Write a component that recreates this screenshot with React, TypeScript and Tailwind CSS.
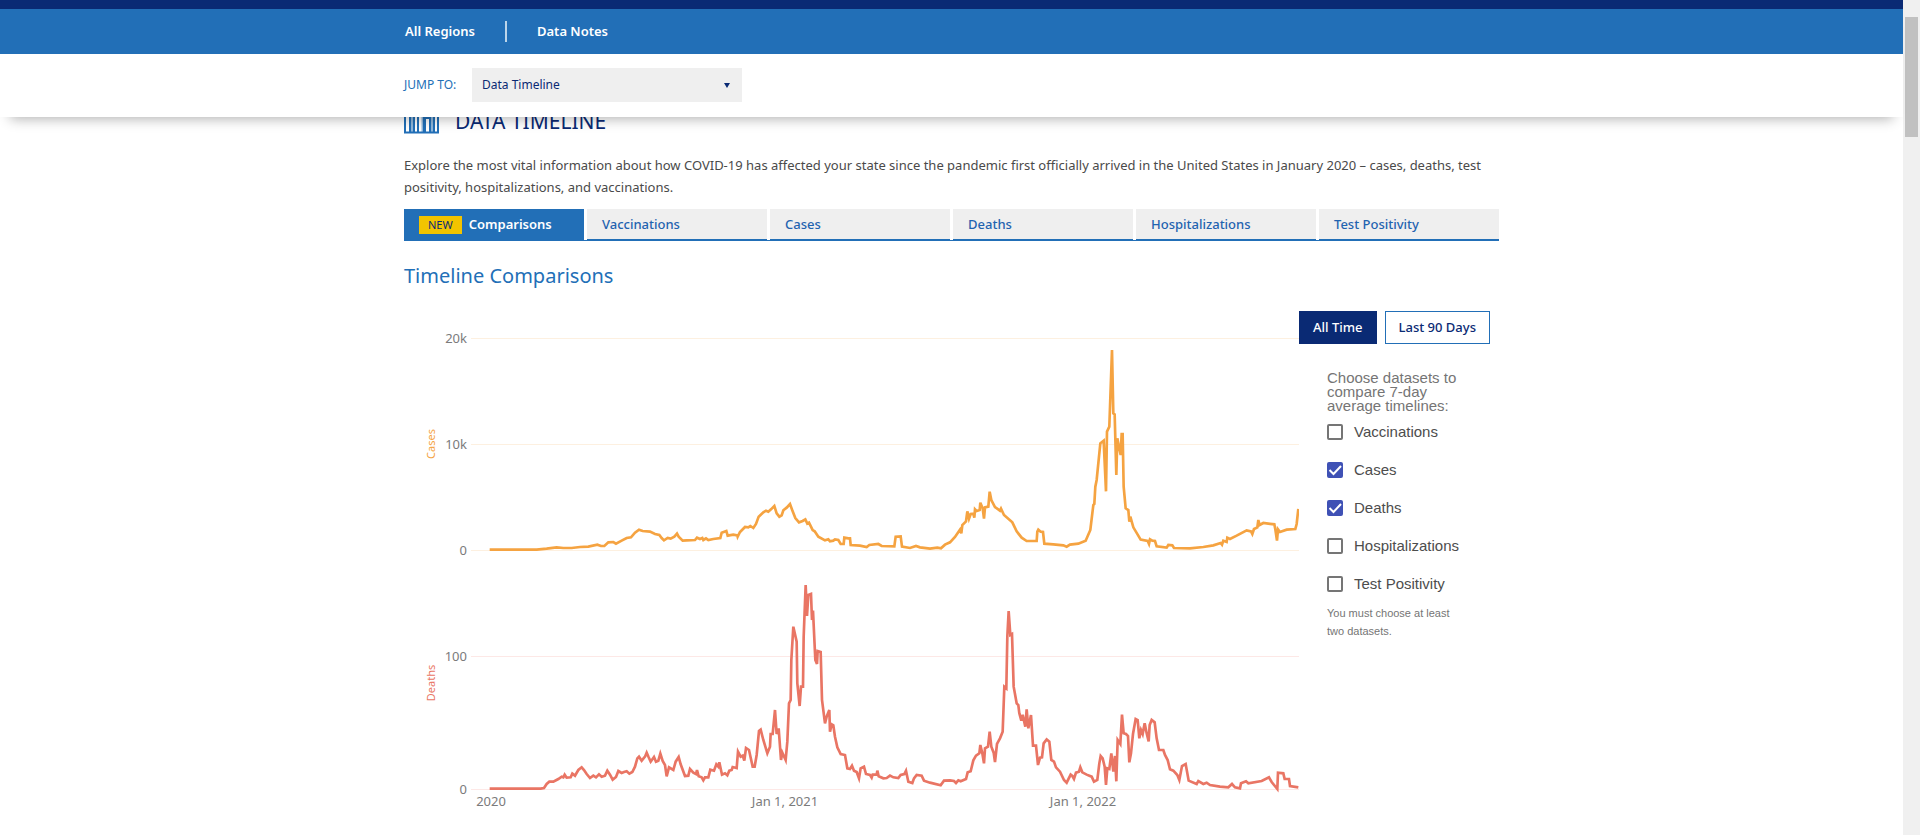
import { useState } from "react";

const TABS = ["Comparisons", "Vaccinations", "Cases", "Deaths", "Hospitalizations", "Test Positivity"];
const DATASETS = ["Vaccinations", "Cases", "Deaths", "Hospitalizations", "Test Positivity"];

const CASES =
  "269,689 410,689 440,686 470,682 490,684 515,684 540,681 565,680 592,674 603,678 613,678 625,667 640,666 648,671 665,662 680,654 693,652 705,638 717,629 728,633 750,635 765,642 778,645 785,654 792,661 803,654 812,656 823,650 831,641 836,650 848,662 860,661 885,660 891,653 900,657 907,654 910,660 918,655 925,660 940,657 961,654 965,638 979,633 983,647 1000,644 1012,646 1013,650 1020,636 1035,621 1045,622 1051,618 1060,624 1068,612 1076,590 1090,577 1098,572 1105,575 1113,568 1123,558 1130,580 1138,590 1145,586 1150,571 1160,563 1170,552 1178,574 1186,594 1197,607 1208,603 1216,598 1222,611 1227,608 1234,622 1238,630 1244,634 1255,650 1275,661 1285,658 1290,664 1300,662 1305,658 1315,660 1322,672 1331,672 1333,653 1345,655 1350,655 1352,675 1380,677 1400,681 1408,675 1435,672 1445,678 1483,679 1487,650 1502,649 1506,680 1530,684 1548,678 1560,682 1590,686 1612,683 1623,685 1635,674 1650,667 1665,651 1680,629 1684,640 1687,615 1698,604 1702,574 1707,596 1712,582 1720,581 1723,593 1725,568 1730,573 1739,570 1741,548 1748,565 1752,596 1755,562 1765,560 1769,515 1774,540 1785,561 1800,572 1803,566 1812,585 1837,607 1850,634 1865,653 1880,663 1910,663 1912,635 1915,629 1922,635 1929,636 1933,671 1960,673 1990,676 2000,680 2010,674 2035,671 2057,662 2071,630 2080,555 2083,552 2086,500 2090,480 2101,370 2111,362 2118,514 2121,335 2128,320 2136,90 2140,280 2144,283 2149,465 2152,355 2158,385 2162,405 2165,342 2168,342 2171,500 2177,565 2185,570 2188,605 2191,590 2200,622 2222,659 2243,663 2247,672 2250,658 2257,662 2265,663 2270,679 2300,683 2305,675 2317,676 2322,684 2370,685 2410,681 2440,676 2462,669 2466,674 2470,662 2480,666 2482,653 2490,657 2510,647 2540,631 2553,634 2557,642 2562,627 2572,622 2575,600 2579,615 2590,609 2605,611 2623,613 2626,628 2631,662 2634,628 2640,636 2660,629 2686,627 2690,612 2695,567";

const DEATHS =
  "269,656 422,656 432,654 440,642 448,635 460,635 475,627 485,620 490,622 494,614 500,623 512,622 517,611 525,617 535,600 545,592 552,600 560,612 570,624 580,617 588,622 597,613 605,620 615,617 622,602 630,614 638,629 648,621 655,603 665,609 672,606 680,604 688,611 697,606 705,590 712,565 717,560 725,572 735,560 740,548 746,562 752,575 762,561 768,575 775,572 781,551 788,573 795,585 800,619 807,592 820,600 827,575 836,561 842,583 855,618 865,617 870,597 880,608 888,612 891,600 896,619 905,622 910,631 915,622 925,622 931,599 942,602 949,583 955,590 958,577 966,614 975,610 982,616 988,602 995,600 998,591 1010,594 1014,545 1022,560 1028,557 1033,572 1038,534 1047,540 1058,590 1064,590 1070,555 1077,483 1082,479 1090,510 1102,550 1110,530 1112,492 1118,492 1125,420 1130,492 1136,475 1143,570 1147,548 1157,570 1162,515 1167,400 1172,390 1174,270 1180,170 1190,215 1192,340 1199,408 1203,350 1209,350 1211,200 1217,45 1221,138 1225,75 1233,72 1236,150 1239,122 1246,270 1251,282 1253,243 1262,246 1266,390 1275,460 1280,440 1284,430 1288,420 1290,485 1295,463 1300,466 1305,500 1312,532 1322,552 1335,555 1342,595 1350,597 1356,587 1362,602 1370,606 1377,625 1382,595 1392,590 1398,612 1410,615 1415,623 1418,614 1430,614 1432,602 1436,619 1450,625 1460,624 1470,617 1480,622 1495,624 1502,615 1513,612 1518,602 1525,635 1537,639 1542,625 1550,615 1565,617 1572,632 1590,638 1622,646 1632,632 1650,631 1662,633 1668,639 1675,631 1682,634 1698,627 1703,607 1712,604 1720,571 1728,557 1738,550 1741,525 1747,550 1752,580 1755,535 1764,530 1769,485 1774,530 1781,548 1785,576 1791,522 1800,505 1808,485 1813,350 1819,355 1822,200 1826,123 1831,195 1836,192 1841,350 1850,400 1855,405 1858,430 1864,452 1868,434 1876,470 1880,418 1885,475 1893,435 1899,527 1908,527 1914,585 1920,563 1926,562 1931,520 1940,508 1948,515 1954,570 1962,575 1968,592 1980,605 1992,630 2000,638 2012,614 2017,618 2022,627 2028,608 2037,605 2041,592 2047,607 2060,614 2075,620 2082,635 2092,630 2098,580 2102,558 2108,565 2114,590 2118,645 2122,595 2128,597 2134,550 2140,605 2145,558 2149,634 2153,510 2161,522 2166,434 2171,490 2178,492 2184,498 2188,577 2193,550 2199,492 2207,447 2213,450 2218,505 2223,480 2228,492 2234,460 2240,490 2246,514 2249,465 2255,450 2264,457 2270,505 2277,540 2290,540 2295,555 2303,570 2310,598 2320,602 2332,615 2338,630 2346,588 2357,582 2366,632 2390,642 2395,633 2410,642 2420,638 2430,645 2460,650 2485,652 2496,642 2505,652 2520,655 2523,640 2538,634 2545,640 2585,633 2607,622 2615,636 2632,657 2634,608 2650,610 2654,627 2667,627 2670,648 2695,652";

function TimelineIcon() {
  return (
    <svg width="35" height="36" viewBox="0 0 35 36" fill="none" stroke="#226fb7" strokeWidth="2" aria-hidden="true">
      <path d="M1 35V14h5v21M10 35V8h4v27M14 35V3h6v32M21 35V20h5v15M30 35V10h4v25M0 34.500h35" />
      <path strokeWidth="3" d="M7.500 35V14M19 35V6M28 35V12" opacity=".5" />
    </svg>
  );
}

function TimelineChart() {
  return (
    <svg className="min-w-0 shrink-0" width="895" height="509" viewBox="0 0 895 509" role="img" aria-label="Cases and deaths timelines">
      <g stroke="#fdf0e0" shapeRendering="crispEdges">
        <path d="M67 27.500H895M67 133.500H895M67 239.500H895" />
      </g>
      <g stroke="#fde8e6" shapeRendering="crispEdges">
        <path d="M67 345.500H895M67 478.500H895" />
      </g>
      <polyline points={CASES} transform="translate(-4 9) scale(.33333)" fill="none" stroke="#f5a341" strokeWidth="8" />
      <polyline points={DEATHS} transform="translate(-4 259) scale(.33333)" fill="none" stroke="#e97564" strokeWidth="8" />
      <g fill="#7b7b7b" fontSize="13" textAnchor="end">
        <text x="63" y="32">20k</text>
        <text x="63" y="138">10k</text>
        <text x="63" y="244">0</text>
        <text x="63" y="350">100</text>
        <text x="63" y="483">0</text>
      </g>
      <g fill="#7b7b7b" fontSize="13" textAnchor="middle">
        <text x="87" y="495">2020</text>
        <text x="381" y="495">Jan 1, 2021</text>
        <text x="679" y="495">Jan 1, 2022</text>
      </g>
      <g fontSize="11" textAnchor="middle">
        <text transform="translate(31 133) rotate(-90)" fill="#f5a341">Cases</text>
        <text transform="translate(31 372) rotate(-90)" fill="#e97564">Deaths</text>
      </g>
    </svg>
  );
}

export default function App() {
  const [tab, setTab] = useState("Comparisons");
  const [range, setRange] = useState("All Time");
  const [chosen, setChosen] = useState(["Cases", "Deaths"]);
  const toggle = (name: string) =>
    setChosen((c) => (c.includes(name) ? c.filter((n) => n !== name) : [...c, name]));

  return (
    <div className="flex h-screen overflow-hidden bg-white font-['Noto_Sans',sans-serif]">
      <div className="relative min-w-0 flex-1">
        <header className="absolute inset-x-0 top-0 z-10 bg-white shadow-[0_12px_12px_-10px_rgba(0,0,0,0.3)]">
          <div className="h-[9px] bg-[#0a2a74]" />
          <div className="bg-[#226fb7]">
            <nav className="mx-auto flex h-[45px] max-w-[1095px] items-center px-px text-[13px] font-semibold text-white">
              <a href="#regions" className="pr-[30px]">All Regions</a>
              <span className="h-[21px] w-[2px] bg-[#bcd5ea]" />
              <a href="#notes" className="pl-[30px]">Data Notes</a>
            </nav>
          </div>
          <div className="mx-auto flex h-[63px] max-w-[1095px] items-center pb-px">
            <label htmlFor="jump" className="w-[68px] text-[12px] text-[#226fb7]">JUMP TO:</label>
            <div className="relative">
              <select id="jump" className="block h-[34px] w-[270px] appearance-none bg-[#efefef] px-[10px] text-[12px] text-[#0a2a74]">
                <option>Data Timeline</option>
              </select>
              <svg className="pointer-events-none absolute top-[15px] right-3" width="6" height="5" viewBox="0 0 6 5" fill="#0a2a74" aria-hidden="true">
                <path d="M0 0h6L3 5z" />
              </svg>
            </div>
          </div>
        </header>

        <main className="mx-auto max-w-[1095px] pt-[98px]">
          <div className="flex h-9 items-center gap-4">
            <TimelineIcon />
            <h1 className="pt-[10px] text-[21px] leading-[26px] text-[#0a2a74]">DATA TIMELINE</h1>
          </div>
          <p className="mt-5 text-[13px] leading-[22px] text-[#4a4a4a]">
            Explore the most vital information about how COVID-19 has affected your state since the pandemic first officially arrived in the United States in January 2020 – cases, deaths, test positivity, hospitalizations, and vaccinations.
          </p>
          <div role="tablist" className="mt-[11px] grid grid-cols-6 gap-[3px] border-b border-[#226fb7]">
            {TABS.map((name) => (
              <button
                key={name}
                role="tab"
                aria-selected={tab === name}
                onClick={() => setTab(name)}
                className={
                  "flex h-[31px] items-center gap-[7px] border-b border-[#226fb7] px-[15px] pt-[2px] text-[13px] " +
                  (tab === name ? "bg-[#226fb7] font-semibold text-white" : "bg-[#efefef] font-medium text-[#1f63b0]")
                }
              >
                {name === "Comparisons" && (
                  <span className="bg-[#f2c400] px-[9px] text-[11px] leading-[18px] font-normal text-[#0a2a74]">NEW</span>
                )}
                {name}
              </button>
            ))}
          </div>
          <h2 className="mt-[22px] text-[20px] leading-[26px] text-[#226fb7]">Timeline Comparisons</h2>
          <div className="mt-[22px] flex">
            <TimelineChart />
            <aside className="flex-1">
              <div className="flex gap-2 text-[13px]">
                {["All Time", "Last 90 Days"].map((name) => (
                  <button
                    key={name}
                    onClick={() => setRange(name)}
                    className={
                      "h-[33px] border px-[13px] font-medium whitespace-nowrap " +
                      (range === name ? "border-[#0a2a74] bg-[#0a2a74] text-white" : "border-[#226fb7] bg-white text-[#0a2a74]")
                    }
                  >
                    {name}
                  </button>
                ))}
              </div>
              <fieldset className="mt-[27px] ml-7 font-['Liberation_Sans',Arial,sans-serif]">
                <legend className="w-[140px] text-[15px] leading-[14px] text-[#757575]">
                  Choose datasets to compare 7-day average timelines:
                </legend>
                {DATASETS.map((name) => (
                  <label key={name} className="flex h-[38px] items-center gap-[11px] text-[15px] text-[#4d4d4d]">
                    <span className="relative flex">
                      <input
                        type="checkbox"
                        checked={chosen.includes(name)}
                        onChange={() => toggle(name)}
                        className="peer size-4 appearance-none rounded-xs border-2 border-[#757575] checked:border-[#3f51b5] checked:bg-[#3f51b5]"
                      />
                      <svg className="pointer-events-none absolute inset-0 hidden peer-checked:block" width="16" height="16" viewBox="0 0 16 16" fill="none" stroke="#fff" strokeWidth="2" aria-hidden="true">
                        <path d="M2.500 8l4 4 7.500-8" />
                      </svg>
                    </span>
                    {name}
                  </label>
                ))}
                <p className="w-[140px] pt-px text-[11px] leading-[18px] text-[#757575]">You must choose at least two datasets.</p>
              </fieldset>
            </aside>
          </div>
        </main>
      </div>
      <div className="w-[17px] shrink-0 bg-[#f0f0f0] px-[2px] pt-[17px]" aria-hidden="true">
        <div className="h-[120px] bg-[#c1c1c1]" />
      </div>
    </div>
  );
}
